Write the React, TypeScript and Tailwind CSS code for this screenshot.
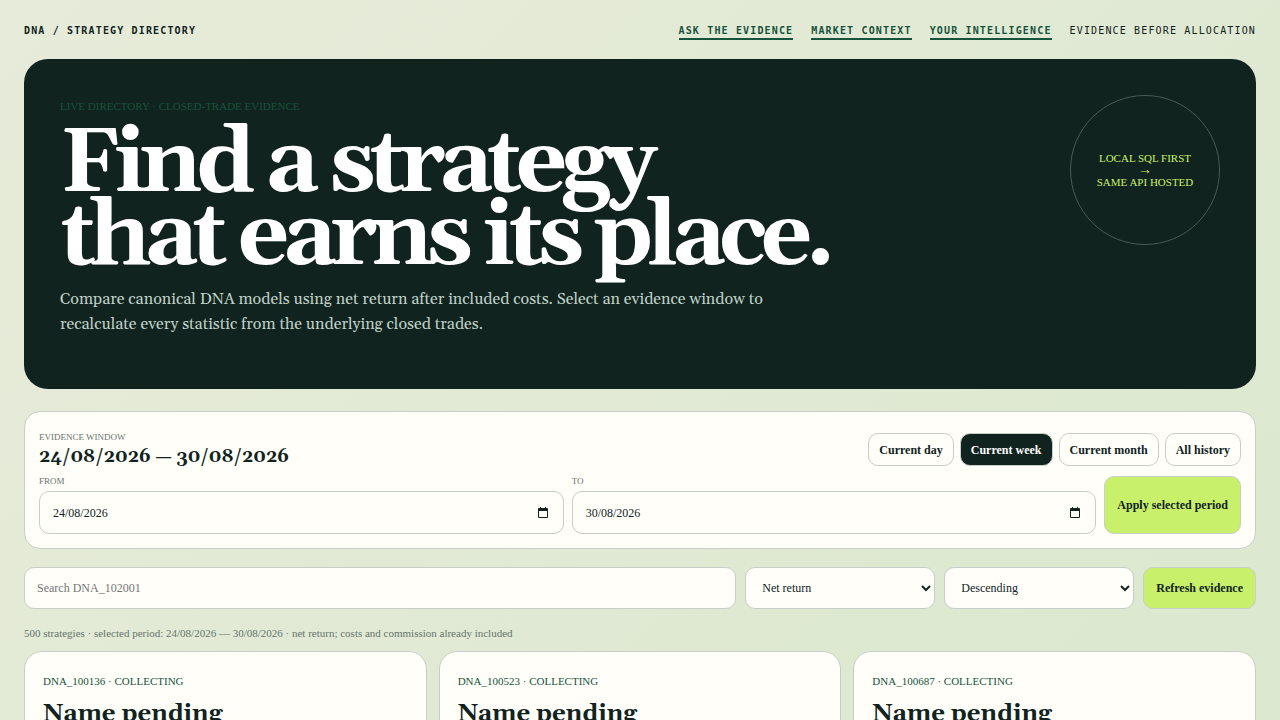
import React, { useState } from 'react';

interface Strategy {
  id: string;
  status: string;
  name: string;
}

interface DateFieldProps {
  id: string;
  label: string;
  value: string;
  onChange: (value: string) => void;
}

const navLinks = ['Ask the evidence', 'Market context', 'Your intelligence'];
const periods = ['Current day', 'Current week', 'Current month', 'All history'];

const strategies: Strategy[] = [
  { id: 'DNA_100136', status: 'COLLECTING', name: 'Name pending' },
  { id: 'DNA_100523', status: 'COLLECTING', name: 'Name pending' },
  { id: 'DNA_100687', status: 'COLLECTING', name: 'Name pending' },
];

// Shared look of the inputs, selects and buttons
const control = 'rounded-[10px] border border-[#c6cec6] bg-[#fffef9] text-[12px]';

function TopBar() {
  return (
    <header className="flex items-center justify-between font-['DejaVu_Sans_Mono',monospace] text-[10px] leading-[15px] tracking-[0.115em] uppercase">
      <strong>DNA / Strategy directory</strong>
      <nav className="flex items-center gap-[18px]">
        {navLinks.map((label) => (
          <a key={label} href="#" className="-mb-[2px] border-b-2 border-[#16533c] font-bold text-[#16533c]">
            {label}
          </a>
        ))}
        <span>Evidence before allocation</span>
      </nav>
    </header>
  );
}

function Hero() {
  return (
    <section className="mt-[21px] flex min-h-[330px] items-start justify-between rounded-[24px] bg-[#11231e] p-9 text-white">
      <div>
        <p className="mt-1 text-[11px] leading-[14px] text-[#16533c]">LIVE DIRECTORY · CLOSED-TRADE EVIDENCE</p>
        <h1 className="mt-4 font-[Gelasio,Georgia,serif] text-[90px] leading-[73px] font-bold tracking-[-0.07em]">
          Find a strategy
          <br />
          that earns its place.
        </h1>
        <p className="mt-3 max-w-[720px] font-[Gelasio,Georgia,serif] text-[16px] leading-[25px] text-[#bfd0c7]">
          Compare canonical DNA models using net return after included costs. Select an evidence window to recalculate
          every statistic from the underlying closed trades.
        </p>
      </div>
      <div className="flex size-[150px] shrink-0 flex-col items-center justify-center rounded-full border border-[#4a5a53] text-[11px] leading-[12px] text-[#c9f06a]">
        <span>LOCAL SQL FIRST</span>
        <span className="text-[14px] leading-[12px]">→</span>
        <span>SAME API HOSTED</span>
      </div>
    </section>
  );
}

function DateField({ id, label, value, onChange }: DateFieldProps) {
  return (
    <div className="grid gap-[5px]">
      <label htmlFor={id} className="text-[9px] leading-[10px] text-[#66756e]">
        {label}
      </label>
      <div className={`${control} flex h-[43px] items-center pr-[15px] pl-[13px]`}>
        <input
          id={id}
          type="text"
          value={value}
          onChange={(e) => onChange(e.target.value)}
          className="min-w-0 flex-1 leading-[16px] outline-none"
        />
        <button type="button" aria-label={`Choose date: ${label}`}>
          <svg width="10" height="11" viewBox="0 0 10 11" fill="#11231e">
            <path d="M2 0h1v1h4V0h1v1h1a1 1 0 0 1 1 1v8a1 1 0 0 1-1 1H1a1 1 0 0 1-1-1V2a1 1 0 0 1 1-1h1V0zM1 4v6h8V4H1z" />
          </svg>
        </button>
      </div>
    </div>
  );
}

export default function App() {
  const [period, setPeriod] = useState('Current week');
  const [from, setFrom] = useState('24/08/2026');
  const [to, setTo] = useState('30/08/2026');
  const [search, setSearch] = useState('');

  return (
    <div className="min-h-screen bg-linear-135 from-[#e7ebd9] to-[#dbe8cf] font-['Liberation_Serif',serif] text-[#11231e]">
      <main className="px-6 pt-[23px]">
        <TopBar />
        <Hero />

        <section className="mt-[22px] rounded-[16px] border border-[#c6cec6] bg-[#fffef9] p-[14px]">
          <div className="flex items-center justify-between">
            <div className="pt-[6px]">
              <p className="text-[9px] leading-[10px] text-[#66756e]">EVIDENCE WINDOW</p>
              <h2 className="mt-1 font-[Gelasio,Georgia,serif] text-[18px] leading-[22px] font-bold">
                {from} — {to}
              </h2>
            </div>
            <div className="flex gap-[6px] pt-[5px]">
              {periods.map((label) => (
                <button
                  key={label}
                  onClick={() => setPeriod(label)}
                  className={
                    period === label
                      ? 'h-[33px] rounded-[10px] border border-[#c6cec6] bg-[#11231e] px-[10px] text-[12px] font-bold text-white'
                      : `${control} h-[33px] px-[10px] font-bold`
                  }
                >
                  {label}
                </button>
              ))}
            </div>
          </div>
          <div className="mt-2 grid grid-cols-[1fr_1fr_auto] gap-2">
            <DateField id="from" label="FROM" value={from} onChange={setFrom} />
            <DateField id="to" label="TO" value={to} onChange={setTo} />
            <button className="rounded-[10px] border border-[#c6cec6] bg-[#c9f06a] px-3 text-[12px] font-bold">
              Apply selected period
            </button>
          </div>
        </section>

        <section className="mt-[18px] grid grid-cols-[1fr_190px_190px_auto] gap-[9px]">
          <input
            type="search"
            aria-label="Search strategies"
            placeholder="Search DNA_102001"
            value={search}
            onChange={(e) => setSearch(e.target.value)}
            className={`${control} h-[42px] px-3 placeholder:text-[#757575]`}
          />
          <select aria-label="Sort by" className={`${control} h-[42px] px-3`}>
            <option>Net return</option>
          </select>
          <select aria-label="Sort order" className={`${control} h-[42px] px-3`}>
            <option>Descending</option>
            <option>Ascending</option>
          </select>
          <button className="rounded-[10px] border border-[#c6cec6] bg-[#c9f06a] px-3 text-[12px] font-bold">
            Refresh evidence
          </button>
        </section>

        <p className="mt-[18px] text-[11px] leading-[13px] text-[#66756e]">
          500 strategies · selected period: {from} — {to} · net return; costs and commission already included
        </p>

        <section className="mt-[11px] grid grid-cols-3 gap-3">
          {strategies.map((strategy) => (
            <article key={strategy.id} className="rounded-[18px] border border-[#c6cec6] bg-[#fffef9] p-[18px]">
              <p className="mt-1 text-[11px] leading-[14px] text-[#16533c]">
                {strategy.id} · {strategy.status}
              </p>
              <h3 className="mt-[10px] font-[Gelasio,Georgia,serif] text-[24px] leading-[32px] font-bold">
                {strategy.name}
              </h3>
            </article>
          ))}
        </section>
      </main>
    </div>
  );
}
